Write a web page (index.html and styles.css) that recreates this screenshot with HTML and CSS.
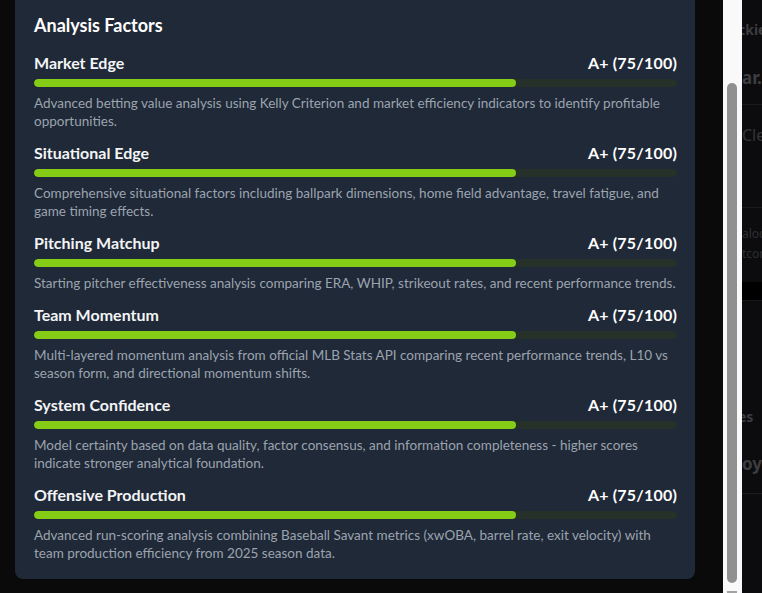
FILE: index.html
```html
<!DOCTYPE html>
<html lang="en">
<head>
<meta charset="utf-8">
<title>Analysis Factors</title>
<link rel="stylesheet" href="styles.css">
</head>
<body>
<div class="screen">
  <div class="modal-area">
    <section class="card">
      <h2 class="card-title">Analysis Factors</h2>
      <div class="factors">
        <div class="factor">
          <div class="factor-head"><span class="factor-name">Market Edge</span><span class="factor-grade">A+ (75/100)</span></div>
          <div class="bar"><div class="bar-fill" style="width:75%"></div></div>
          <p class="factor-desc">Advanced betting value analysis using Kelly Criterion and market efficiency indicators to identify profitable opportunities.</p>
        </div>
        <div class="factor">
          <div class="factor-head"><span class="factor-name">Situational Edge</span><span class="factor-grade">A+ (75/100)</span></div>
          <div class="bar"><div class="bar-fill" style="width:75%"></div></div>
          <p class="factor-desc">Comprehensive situational factors including ballpark dimensions, home field advantage, travel fatigue, and game timing effects.</p>
        </div>
        <div class="factor">
          <div class="factor-head"><span class="factor-name">Pitching Matchup</span><span class="factor-grade">A+ (75/100)</span></div>
          <div class="bar"><div class="bar-fill" style="width:75%"></div></div>
          <p class="factor-desc">Starting pitcher effectiveness analysis comparing ERA, WHIP, strikeout rates, and recent performance trends.</p>
        </div>
        <div class="factor">
          <div class="factor-head"><span class="factor-name">Team Momentum</span><span class="factor-grade">A+ (75/100)</span></div>
          <div class="bar"><div class="bar-fill" style="width:75%"></div></div>
          <p class="factor-desc">Multi-layered momentum analysis from official MLB Stats API comparing recent performance trends, L10 vs season form, and directional momentum shifts.</p>
        </div>
        <div class="factor">
          <div class="factor-head"><span class="factor-name">System Confidence</span><span class="factor-grade">A+ (75/100)</span></div>
          <div class="bar"><div class="bar-fill" style="width:75%"></div></div>
          <p class="factor-desc">Model certainty based on data quality, factor consensus, and information completeness - higher scores indicate stronger analytical foundation.</p>
        </div>
        <div class="factor">
          <div class="factor-head"><span class="factor-name">Offensive Production</span><span class="factor-grade">A+ (75/100)</span></div>
          <div class="bar"><div class="bar-fill" style="width:75%"></div></div>
          <p class="factor-desc">Advanced run-scoring analysis combining Baseball Savant metrics (xwOBA, barrel rate, exit velocity) with team production efficiency from 2025 season data.</p>
        </div>
      </div>
    </section>
  </div>
  <div class="scrollbar">
    <div class="scroll-thumb"></div>
    <div class="scroll-arrow"></div>
  </div>
  <div class="page-behind">
    <div class="bg-panel">
      <div class="bg-row bg-row-top">
        <div class="bg-name">ckie</div>
        <div class="bg-big">ar.</div>
      </div>
      <div class="bg-row bg-row-mid">
        <div class="bg-light">Cle</div>
      </div>
      <div class="bg-row bg-row-small">
        <div class="bg-small">aloc</div>
        <div class="bg-small">tcon</div>
      </div>
    </div>
    <div class="bg-panel bg-panel-2">
      <div class="bg-row bg-row-low">
        <div class="bg-name bg-es">es</div>
        <div class="bg-big bg-oy">oy</div>
      </div>
    </div>
  </div>
</div>
</body>
</html>
```
FILE: styles.css
```css
html, body {
  margin: 0;
  padding: 0;
  background: #0a0a0b;
}

body {
  font-family: Lato, "Noto Sans", sans-serif;
  overflow: hidden;
}

.screen {
  display: flex;
  height: 593px;
  width: 762px;
  overflow: hidden;
}

.modal-area {
  width: 723px;
  padding-left: 15px;
  box-sizing: border-box;
  flex: none;
}

.card {
  width: 680px;
  box-sizing: border-box;
  background: #1f2937;
  border-radius: 0 0 8px 8px;
  padding: 11px 18px 17px 19px;
}

.card-title {
  margin: 0;
  font-size: 18px;
  line-height: 28px;
  font-weight: 700;
  color: #ffffff;
}

.factors {
  margin-top: 12px;
  display: flex;
  flex-direction: column;
  gap: 11px;
}

.factor-head {
  display: flex;
  justify-content: space-between;
  align-items: baseline;
  height: 24px;
  line-height: 24px;
}

.factor-name {
  font-size: 16px;
  font-weight: 700;
  color: #f3f4f6;
}

.factor-grade {
  font-size: 16px;
  font-weight: 700;
  color: #ffffff;
  letter-spacing: 0.2px;
}

.bar {
  margin-top: 4px;
  height: 8px;
  border-radius: 4px;
  background: #263129;
  overflow: hidden;
}

.bar-fill {
  height: 100%;
  border-radius: 4px;
  background: #84cc16;
}

.factor-desc {
  margin: 7px 0 0;
  font-size: 13.5px;
  line-height: 18px;
  color: #9ca3af;
}

.scrollbar {
  flex: none;
  width: 19px;
  height: 593px;
  background: #f9f9f9;
  position: relative;
}

.scroll-thumb {
  position: absolute;
  left: 4px;
  top: 83px;
  width: 10px;
  height: 500px;
  border-radius: 5px;
  background: #909090;
}

.scroll-arrow {
  position: absolute;
  left: 4px;
  top: 591px;
  width: 10px;
  height: 2px;
  background: #a3a3a3;
}

.page-behind {
  flex: none;
  width: 20px;
  overflow: hidden;
  background: #000;
  white-space: nowrap;
  font-family: "Noto Sans", sans-serif;
}

.bg-panel {
  background: #0c0c0e;
  height: 282px;
}

.bg-panel-2 {
  margin-top: 18px;
  height: 293px;
  border-top: 1px solid #18181b;
}

.bg-row {
  border-bottom: 1px solid #1c1c20;
  box-sizing: border-box;
}

.bg-row-top {
  height: 105px;
  padding-top: 18px;
}

.bg-row-mid {
  height: 103px;
  padding-top: 18px;
}

.bg-row-small {
  border-bottom: 0;
  padding-top: 16px;
}

.bg-row-low {
  height: 193px;
  padding-top: 104px;
}

.bg-name {
  font-size: 14px;
  font-weight: 700;
  color: #3d3d40;
  line-height: 24px;
  margin-left: -4px;
}

.bg-big {
  margin-top: 23px;
  font-size: 17px;
  font-weight: 700;
  color: #3d3d40;
  line-height: 26px;
}

.bg-light {
  font-size: 16px;
  color: #343437;
  line-height: 24px;
}

.bg-small {
  font-size: 12px;
  color: #2e2e31;
  line-height: 20px;
}

.bg-oy {
  margin-top: 22px;
  font-size: 17px;
}
```
